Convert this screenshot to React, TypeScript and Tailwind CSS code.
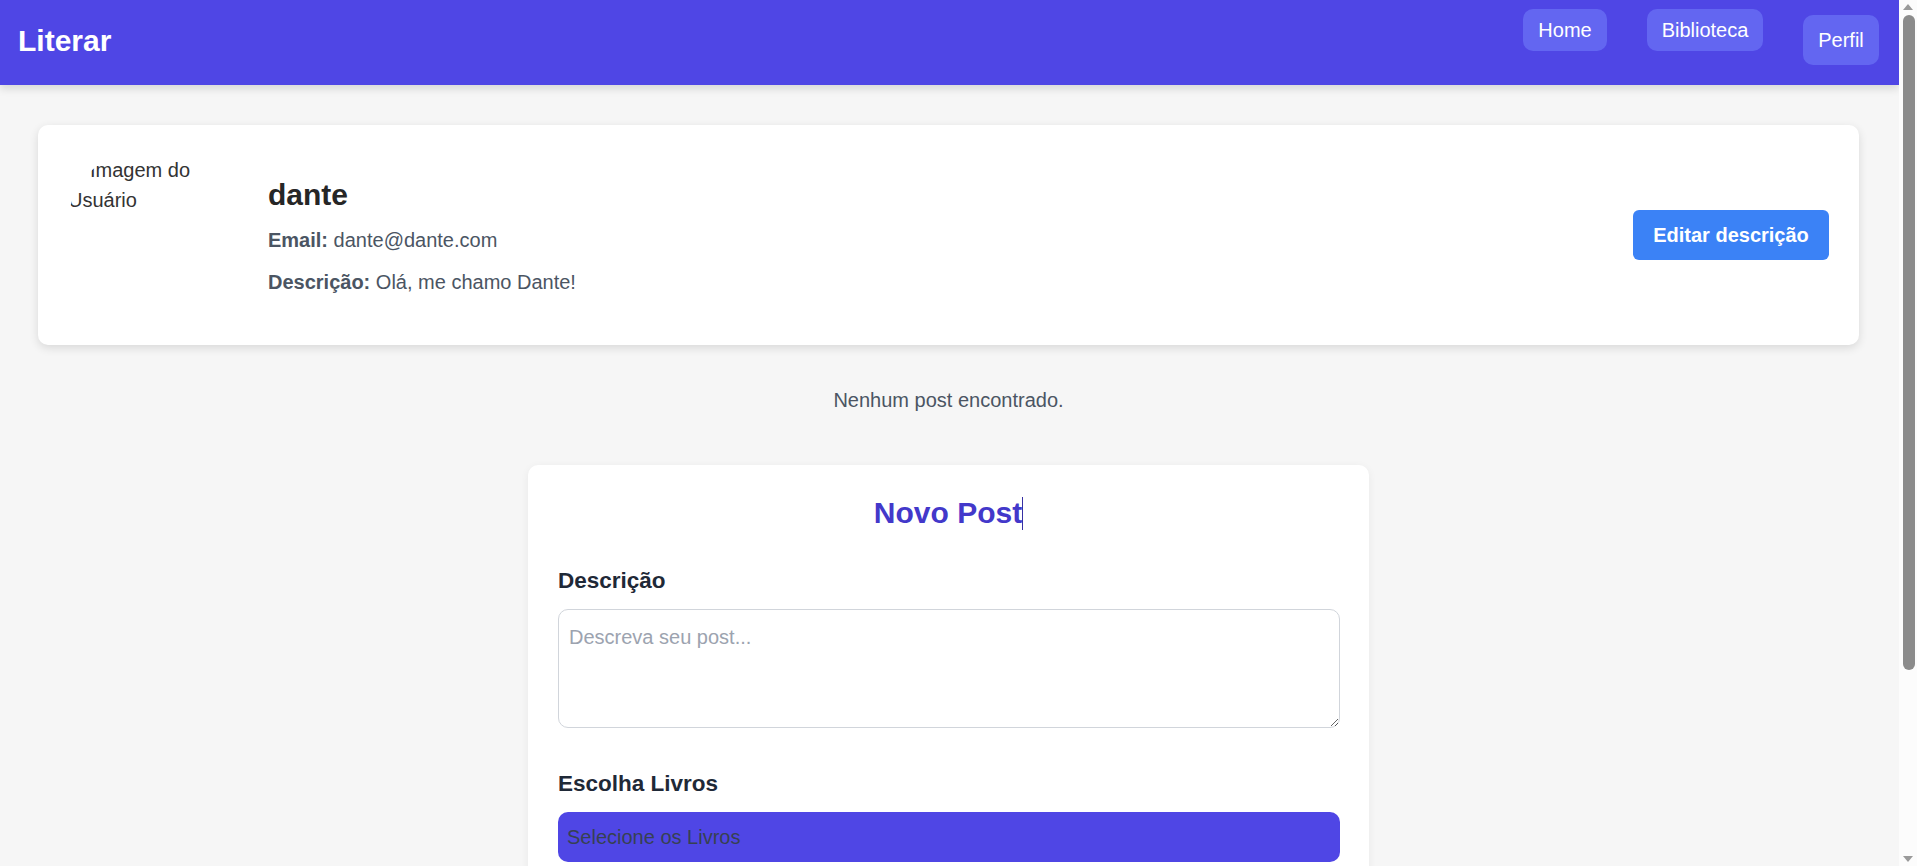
import React from 'react';

const font = { fontFamily: '"Liberation Sans", Arial, sans-serif' };

const navLinks = [
  { label: 'Home', width: 'w-[84px]' },
  { label: 'Biblioteca', width: 'w-[116px]' },
];

const Header: React.FC = () => (
  <header className="h-[85px] bg-[#4f46e5] shadow-[0_4px_8px_rgba(0,0,0,0.12)] flex justify-between items-start pl-[18px] pr-[20px] relative z-10">
    <h1 className="mt-[23px] text-[30px] leading-[36px] font-bold text-white">Literar</h1>
    <nav className="flex items-start gap-[40px] mt-[9px]">
      {navLinks.map((link) => (
        <a
          key={link.label}
          className={`${link.width} h-[42px] flex items-center justify-center rounded-[10px] bg-[#6366f1] text-white text-[20px]`}
        >
          {link.label}
        </a>
      ))}
      <button className="w-[76px] h-[50px] mt-[6px] flex items-center justify-center rounded-[10px] bg-[#6366f1] text-white text-[20px]">
        Perfil
      </button>
    </nav>
  </header>
);

const ProfileCard: React.FC = () => (
  <section className="bg-white rounded-[10px] shadow-[0_3px_10px_rgba(0,0,0,0.12)] flex items-center px-[30px] py-[25px] min-h-[220px]">
    <div className="self-start w-[150px] h-[150px] rounded-full overflow-hidden flex-shrink-0 text-[20px] leading-[30px] text-[#333] pt-[5px]">
      <span className="inline-block w-[22px]" />
      Imagem do Usuário
    </div>
    <div className="ml-[50px] flex-1 mt-[4px]">
      <h2 className="text-[30px] leading-[36px] font-bold text-[#262626]">dante</h2>
      <p className="mt-[12px] text-[20px] leading-[30px] text-[#4b5563]">
        <strong>Email:</strong> dante@dante.com
      </p>
      <p className="mt-[12px] text-[20px] leading-[30px] text-[#4b5563]">
        <strong>Descrição:</strong> Olá, me chamo Dante!
      </p>
    </div>
    <button className="w-[196px] h-[50px] rounded-[6px] bg-[#3b82f6] text-white text-[20px] font-bold">
      Editar descrição
    </button>
  </section>
);

const NewPostForm: React.FC = () => (
  <section className="mx-auto w-[841px] bg-white rounded-[10px] shadow-[0_2px_8px_rgba(0,0,0,0.06)] p-[30px]">
    <h2 className="text-center text-[30px] leading-[36px] font-bold text-[#4338ca]">
      Novo Post<span className="inline-block w-px h-[33px] bg-[#3730a3] align-middle -mt-[4px]" />
    </h2>
    <label className="block mt-[36px] text-[22.5px] leading-[28px] font-bold text-[#1f2937]">Descrição</label>
    <textarea
      placeholder="Descreva seu post..."
      className="block mt-[14px] w-[782px] h-[119px] rounded-[10px] border border-[#d1d5db] px-[10px] pt-[12px] text-[20px] text-[#374151] placeholder:text-[#9ca3af] outline-none"
    />
    <label className="block mt-[42px] text-[22.5px] leading-[28px] font-bold text-[#1f2937]">Escolha Livros</label>
    <div className="mt-[14px] w-[782px] h-[50px] rounded-[10px] bg-[#4f46e5] flex items-center px-[9px] text-[20px] text-[#374151]">
      Selecione os Livros
    </div>
    <div className="mt-[30px] flex flex-wrap gap-[10px] min-h-[40px]" />
    <button className="mt-[20px] w-[782px] h-[50px] rounded-[10px] bg-[#4f46e5] text-white text-[20px] font-bold">
      Publicar
    </button>
  </section>
);

// browser scrollbar as it shows in the screenshot
const ScrollBar: React.FC = () => (
  <div className="fixed right-0 top-0 h-screen w-[18px] bg-[#fcfcfc] flex flex-col items-center z-20">
    <svg width="10" height="6" viewBox="0 0 10 6" className="mt-[4px]">
      <path d="M5 0 L10 6 L0 6 Z" fill="#9a9a9a" />
    </svg>
    <div className="mt-[5px] w-[12px] h-[655px] rounded-full bg-[#8b8b8b] ml-[1px]" />
    <div className="flex-1" />
    <svg width="10" height="6" viewBox="0 0 10 6" className="mb-[4px]">
      <path d="M0 0 L10 0 L5 6 Z" fill="#9a9a9a" />
    </svg>
  </div>
);

export default function App() {
  return (
    <div className="min-h-screen bg-[#f6f6f6] pr-[18px]" style={font}>
      <Header />
      <main className="pl-[38px] pr-[40px] pt-[40px] pb-[60px]">
        <ProfileCard />
        <p className="mt-[40px] text-center text-[20px] leading-[30px] text-[#4b5563]">Nenhum post encontrado.</p>
        <div className="mt-[50px]">
          <NewPostForm />
        </div>
      </main>
      <ScrollBar />
    </div>
  );
}
